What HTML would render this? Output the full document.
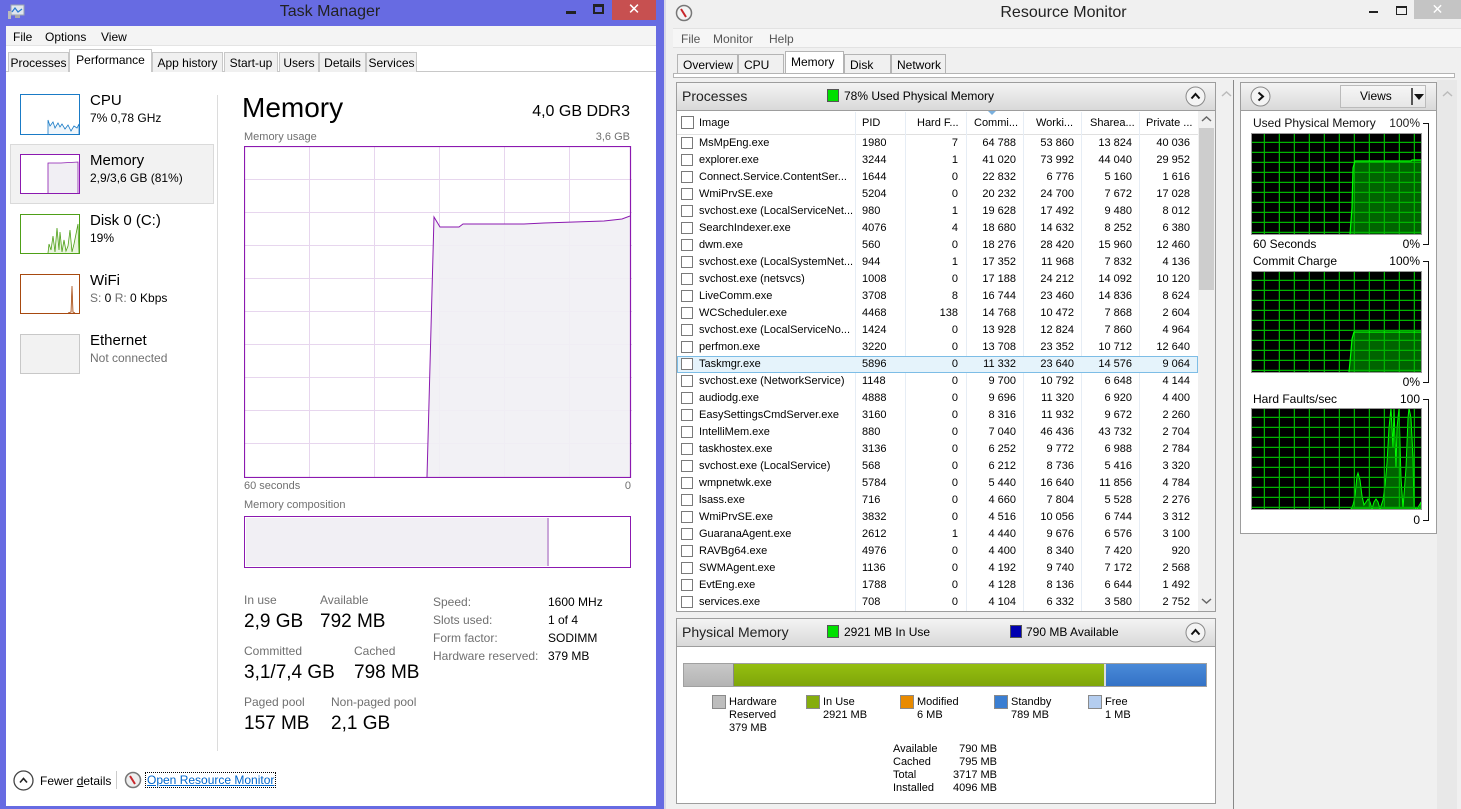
<!DOCTYPE html>
<html><head><meta charset="utf-8">
<style>
*{margin:0;padding:0;box-sizing:border-box}
body{width:1461px;height:809px;overflow:hidden;position:relative;background:#f0f0f0;font-family:"Liberation Sans",sans-serif;color:#000}
.a{position:absolute;white-space:nowrap}
.g{color:#707070}
.s11{font-size:11px}.s12{font-size:12px}
.tab{position:absolute;top:52px;height:20px;background:#f0f0f0;border:1px solid #c8c8c8;border-bottom:none;font-size:12px;padding:3px 0 0 0;text-align:center}
.rt{position:absolute;height:17px;left:677px;width:521px;font-size:11px}
.rt span{position:absolute;top:2px}
.cb{position:absolute;left:4px;top:2px;width:12px;height:12px;border:1px solid #7a7a7a;background:#fff}
.n{text-align:right}
.vl{position:absolute;top:112px;height:499px;width:1px;background:#e6edf5}
.rtab{position:absolute;top:54px;height:19px;background:#f0f0f0;border:1px solid #b4b4b4;border-bottom:none;font-size:12px;padding:3px 0 0 5px}
.hdr{position:absolute;left:676px;width:540px;height:29px;background:linear-gradient(#f4f4f4,#d9d9d9);border:1px solid #9d9d9d}
.circ{position:absolute;width:20px;height:20px;border-radius:50%;border:1px solid #8a8a8a;background:linear-gradient(#fff,#e2e2e2)}
.lg{position:absolute;width:14px;height:14px;border:1px solid #8a8a8a}
</style></head><body>

<!-- ============ TASK MANAGER ============ -->
<div class="a" style="left:0;top:0;width:665px;height:809px;background:#676be2"></div>
<svg class="a" style="left:7px;top:4px" width="18" height="16"><rect x="4" y="1" width="13" height="10" fill="#dfe6ee" stroke="#9aa4ae"/><polyline points="5,8 8,4 11,8 15,5" fill="none" stroke="#2a7ad0" stroke-width="1.2"/><rect x="1" y="7" width="3" height="8" fill="#bbb"/><rect x="8" y="11" width="5" height="3" fill="#aaa"/></svg>
<div class="a" style="left:0;width:660px;top:3px;text-align:center;font-size:16px;color:#222">Task Manager</div>
<div class="a" style="left:566px;top:11px;width:10px;height:3px;background:#222"></div>
<div class="a" style="left:593px;top:4px;width:11px;height:10px;border:2px solid #222;border-top-width:3px"></div>
<div class="a" style="left:612px;top:0;width:44px;height:20px;background:#c75050;color:#fff;text-align:center;font-size:15px;line-height:19px">✕</div>

<div class="a" style="left:6px;top:26px;width:650px;height:780px;background:#fff"></div>
<div class="a" style="left:6px;top:26px;width:650px;height:20px;background:#f4f4f4;border-bottom:1px solid #e4e4e4"></div>
<div class="a s12" style="left:13px;top:30px">File</div>
<div class="a s12" style="left:45px;top:30px">Options</div>
<div class="a s12" style="left:101px;top:30px">View</div>
<div class="a" style="left:6px;top:71px;width:650px;height:1px;background:#c8c8c8"></div>
<div class="tab" style="left:8px;width:61px">Processes</div>
<div class="tab" style="left:69px;top:49px;height:23px;width:83px;background:#fff;padding-top:3px">Performance</div>
<div class="tab" style="left:152px;width:71px">App history</div>
<div class="tab" style="left:224px;width:54px">Start-up</div>
<div class="tab" style="left:279px;width:40px">Users</div>
<div class="tab" style="left:319px;width:47px">Details</div>
<div class="tab" style="left:366px;width:51px">Services</div>

<!-- sidebar -->
<div class="a" style="left:10px;top:144px;width:204px;height:60px;background:#f2f2f2;border:1px solid #dadada"></div>
<svg class="a" style="left:20px;top:94px" width="60" height="41"><rect x="0.5" y="0.5" width="59" height="40" fill="#fff" stroke="#1a7bc6"/><polyline points="28,40 28,26 30,32 33,28 35,34 38,29 40,33 42,30 45,35 48,31 51,37 54,32 57,34 59,30 59,40" fill="#f0f6fb" stroke="#1a7bc6" stroke-width="0.8"/></svg>
<div class="a" style="left:90px;top:92px;font-size:15px">CPU</div>
<div class="a s12" style="left:90px;top:111px">7% 0,78 GHz</div>
<svg class="a" style="left:20px;top:154px" width="60" height="40"><rect x="0.5" y="0.5" width="59" height="39" fill="#fff" stroke="#8b19b0"/><polyline points="28,39 28,9 41,9 58,8 58,39" fill="#f1eff4" stroke="#8b19b0" stroke-width="0.8"/></svg>
<div class="a" style="left:90px;top:152px;font-size:15px">Memory</div>
<div class="a s12" style="left:90px;top:171px">2,9/3,6 GB (81%)</div>
<svg class="a" style="left:20px;top:214px" width="60" height="40"><rect x="0.5" y="0.5" width="59" height="39" fill="#fff" stroke="#4ea017"/><polyline points="28,39 29,30 31,36 33,22 35,38 37,14 39,36 40,18 42,38 44,26 46,37 48,32 50,16 52,38 54,30 56,20 58,10 59,39" fill="#eaf5e0" stroke="#4ea017" stroke-width="0.8"/></svg>
<div class="a" style="left:90px;top:212px;font-size:15px">Disk 0 (C:)</div>
<div class="a s12" style="left:90px;top:231px">19%</div>
<svg class="a" style="left:20px;top:274px" width="60" height="40"><rect x="0.5" y="0.5" width="59" height="39" fill="#fff" stroke="#a7490f"/><polyline points="48,39 51,38 52,12 53,38 55,39" fill="#f4e4d8" stroke="#a7490f" stroke-width="0.8"/></svg>
<div class="a" style="left:90px;top:272px;font-size:15px">WiFi</div>
<div class="a s12" style="left:90px;top:291px"><span class="g">S:</span> 0 <span class="g">R:</span> 0 Kbps</div>
<div class="a" style="left:20px;top:334px;width:60px;height:40px;background:#f2f2f2;border:1px solid #c8c8c8"></div>
<div class="a" style="left:90px;top:332px;font-size:15px">Ethernet</div>
<div class="a s12 g" style="left:90px;top:351px">Not connected</div>
<div class="a" style="left:217px;top:95px;width:1px;height:656px;background:#dcdcdc"></div>

<!-- main -->
<div class="a" style="left:242px;top:92px;font-size:28px">Memory</div>
<div class="a" style="left:430px;width:200px;text-align:right;top:103px;font-size:16px">4,0 GB DDR3</div>
<div class="a s11 g" style="left:244px;top:131px">Memory usage</div>
<div class="a s11 g" style="left:530px;width:100px;text-align:right;top:131px">3,6 GB</div>
<svg class="a" style="left:244px;top:146px" width="388" height="332">
<g stroke="#e7d6ee" stroke-width="1">
<line x1="65.5" y1="0" x2="65.5" y2="332"/><line x1="130.5" y1="0" x2="130.5" y2="332"/><line x1="195.5" y1="0" x2="195.5" y2="332"/><line x1="260.5" y1="0" x2="260.5" y2="332"/><line x1="325.5" y1="0" x2="325.5" y2="332"/>
<line x1="0" y1="33.5" x2="388" y2="33.5"/><line x1="0" y1="66.5" x2="388" y2="66.5"/><line x1="0" y1="99.5" x2="388" y2="99.5"/><line x1="0" y1="132.5" x2="388" y2="132.5"/><line x1="0" y1="165.5" x2="388" y2="165.5"/><line x1="0" y1="198.5" x2="388" y2="198.5"/><line x1="0" y1="231.5" x2="388" y2="231.5"/><line x1="0" y1="264.5" x2="388" y2="264.5"/><line x1="0" y1="297.5" x2="388" y2="297.5"/>
</g>
<polygon points="183,331 190,71 196,81 215,81 219,78 280,78 300,77 330,76 360,75 378,73 386,70 387,331" fill="#f1eff4" fill-opacity="0.9"/>
<polyline points="183,331 190,71 196,81 215,81 219,78 280,78 300,77 330,76 360,75 378,73 386,70 387,70" fill="none" stroke="#8b19b0" stroke-width="1"/>
<rect x="0.5" y="0.5" width="386" height="331" fill="none" stroke="#8b19b0" stroke-width="1.2"/>
</svg>
<div class="a s11 g" style="left:244px;top:480px">60 seconds</div>
<div class="a s11 g" style="left:530px;width:101px;text-align:right;top:480px">0</div>
<div class="a s11 g" style="left:244px;top:499px">Memory composition</div>
<div class="a" style="left:244px;top:516px;width:387px;height:52px;border:1.5px solid #8b19b0;background:#fff"></div>
<div class="a" style="left:246px;top:518px;width:303px;height:48px;background:#f1eff4;border-right:2px solid #c9a6d8"></div>

<div class="a s12 g" style="left:244px;top:593px">In use</div>
<div class="a s12 g" style="left:320px;top:593px">Available</div>
<div class="a" style="left:244px;top:611px;font-size:19px">2,9 GB</div>
<div class="a" style="left:320px;top:611px;font-size:19px">792 MB</div>
<div class="a s12 g" style="left:244px;top:644px">Committed</div>
<div class="a s12 g" style="left:354px;top:644px">Cached</div>
<div class="a" style="left:244px;top:662px;font-size:19px">3,1/7,4 GB</div>
<div class="a" style="left:354px;top:662px;font-size:19px">798 MB</div>
<div class="a s12 g" style="left:244px;top:695px">Paged pool</div>
<div class="a s12 g" style="left:331px;top:695px">Non-paged pool</div>
<div class="a" style="left:244px;top:713px;font-size:19px">157 MB</div>
<div class="a" style="left:331px;top:713px;font-size:19px">2,1 GB</div>
<div class="a s12 g" style="left:433px;top:593px;line-height:18px">Speed:<br>Slots used:<br>Form factor:<br>Hardware reserved:</div>
<div class="a s12" style="left:548px;top:593px;line-height:18px">1600 MHz<br>1 of 4<br>SODIMM<br>379 MB</div>

<svg class="a" style="left:13px;top:770px" width="21" height="21"><circle cx="10.5" cy="10.5" r="9.5" fill="#fff" stroke="#444" stroke-width="1.3"/><polyline points="7,12.5 10.5,8.5 14,12.5" fill="none" stroke="#222" stroke-width="1.6"/></svg>
<div class="a s12" style="left:40px;top:774px">Fewer <u>d</u>etails</div>
<div class="a" style="left:116px;top:771px;width:1px;height:18px;background:#ccc"></div>
<svg class="a" style="left:124px;top:771px" width="18" height="18"><circle cx="9" cy="9" r="7.5" fill="#eee" stroke="#777" stroke-width="1.5"/><line x1="6" y1="5" x2="11" y2="13" stroke="#c8262b" stroke-width="2"/></svg>
<div class="a s12" style="left:145px;top:772px;color:#0066cc;text-decoration:underline;border:1px dotted #000;padding:0 1px">Open Resource Monitor</div>

<!-- ============ RESOURCE MONITOR ============ -->
<div class="a" style="left:664px;top:0;width:2px;height:809px;background:#d8d8e8"></div>
<svg class="a" style="left:675px;top:4px" width="18" height="18"><circle cx="9" cy="9" r="7.5" fill="#f4f4f4" stroke="#777" stroke-width="1.5"/><line x1="6" y1="5" x2="11" y2="13" stroke="#c8262b" stroke-width="2"/></svg>
<div class="a" style="left:666px;width:795px;top:4px;text-align:center;font-size:16px;color:#222">Resource Monitor</div>
<div class="a" style="left:1369px;top:11px;width:9px;height:2px;background:#222"></div>
<div class="a" style="left:1396px;top:6px;width:11px;height:9px;border:1.5px solid #222;border-top-width:2px"></div>
<div class="a" style="left:1414px;top:0;width:47px;height:19px;background:#c4c4c4;color:#fff;text-align:center;font-size:14px;line-height:18px">✕</div>
<div class="a" style="left:673px;top:28px;width:788px;height:20px;background:#f6f6f6;border-top:1px solid #e2e2e2;border-bottom:1px solid #e2e2e2"></div>
<div class="a s12" style="left:681px;top:32px;color:#555">File</div>
<div class="a s12" style="left:713px;top:32px;color:#555">Monitor</div>
<div class="a s12" style="left:769px;top:32px;color:#555">Help</div>
<div class="rtab" style="left:677px;width:61px">Overview</div>
<div class="rtab" style="left:738px;width:46px">CPU</div>
<div class="rtab" style="left:785px;top:51px;height:23px;width:59px;background:#fff">Memory</div>
<div class="rtab" style="left:844px;width:47px">Disk</div>
<div class="rtab" style="left:891px;width:55px">Network</div>
<div class="a" style="left:673px;top:73px;width:782px;height:5px;border:1px solid #b4b4b4;background:#fff"></div>

<!-- processes panel -->
<div class="a" style="left:676px;top:82px;width:540px;height:530px;background:#fff;border:1px solid #9d9d9d"></div>
<div class="hdr" style="top:82px"></div>
<div class="a" style="left:682px;top:88px;font-size:14px;color:#222">Processes</div>
<div class="a" style="left:827px;top:89px;width:12px;height:13px;background:#00e000;border:1px solid #555"></div>
<div class="a s12" style="left:844px;top:89px">78% Used Physical Memory</div>
<svg class="a" style="left:1185px;top:86px" width="21" height="21"><circle cx="10.5" cy="10.5" r="9.5" fill="#f4f4f4" stroke="#8a8a8a"/><polyline points="6.5,12.5 10.5,8 14.5,12.5" fill="none" stroke="#111" stroke-width="2"/></svg>
<div class="a" style="left:677px;top:111px;width:521px;height:24px;border-bottom:1px solid #e0e0e0"></div>
<div class="a" style="left:681px;top:116px;width:13px;height:13px;border:1px solid #777;background:#fff"></div>
<div class="a s11" style="left:699px;top:117px">Image</div>
<div class="a s11" style="left:862px;top:117px">PID</div>
<div class="a s11" style="left:917px;top:117px">Hard F...</div>
<div class="a s11" style="left:974px;top:117px">Commi...</div>
<div class="a s11" style="left:1036px;top:117px">Worki...</div>
<div class="a s11" style="left:1090px;top:117px">Sharea...</div>
<div class="a s11" style="left:1146px;top:117px">Private ...</div>
<div class="a" style="left:988px;top:111px;width:0;height:0;border-left:4px solid transparent;border-right:4px solid transparent;border-top:4px solid #7ab0de"></div>
<div class="vl" style="left:855px"></div><div class="vl" style="left:905px"></div><div class="vl" style="left:966px"></div><div class="vl" style="left:1023px"></div><div class="vl" style="left:1081px"></div><div class="vl" style="left:1139px"></div>
<div class="a" style="left:1198px;top:111px;width:17px;height:500px;background:#f0f0f0"></div>
<div class="a" style="left:1199px;top:128px;width:15px;height:162px;background:#cdcdcd"></div>
<svg class="a" style="left:1201px;top:115px" width="11" height="8"><polyline points="1,6 5.5,2 10,6" fill="none" stroke="#666" stroke-width="1.5"/></svg>
<svg class="a" style="left:1201px;top:597px" width="11" height="8"><polyline points="1,2 5.5,6 10,2" fill="none" stroke="#666" stroke-width="1.5"/></svg>

<div class="rt" style="top:135px"><i class="cb"></i><span style="left:22px">MsMpEng.exe</span><span style="left:185px">1980</span><span class="n" style="right:240px">7</span><span class="n" style="right:182px">64 788</span><span class="n" style="right:124px">53 860</span><span class="n" style="right:66px">13 824</span><span class="n" style="right:8px">40 036</span></div>
<div class="rt" style="top:152px"><i class="cb"></i><span style="left:22px">explorer.exe</span><span style="left:185px">3244</span><span class="n" style="right:240px">1</span><span class="n" style="right:182px">41 020</span><span class="n" style="right:124px">73 992</span><span class="n" style="right:66px">44 040</span><span class="n" style="right:8px">29 952</span></div>
<div class="rt" style="top:169px"><i class="cb"></i><span style="left:22px">Connect.Service.ContentSer...</span><span style="left:185px">1644</span><span class="n" style="right:240px">0</span><span class="n" style="right:182px">22 832</span><span class="n" style="right:124px">6 776</span><span class="n" style="right:66px">5 160</span><span class="n" style="right:8px">1 616</span></div>
<div class="rt" style="top:186px"><i class="cb"></i><span style="left:22px">WmiPrvSE.exe</span><span style="left:185px">5204</span><span class="n" style="right:240px">0</span><span class="n" style="right:182px">20 232</span><span class="n" style="right:124px">24 700</span><span class="n" style="right:66px">7 672</span><span class="n" style="right:8px">17 028</span></div>
<div class="rt" style="top:203px"><i class="cb"></i><span style="left:22px">svchost.exe (LocalServiceNet...</span><span style="left:185px">980</span><span class="n" style="right:240px">1</span><span class="n" style="right:182px">19 628</span><span class="n" style="right:124px">17 492</span><span class="n" style="right:66px">9 480</span><span class="n" style="right:8px">8 012</span></div>
<div class="rt" style="top:220px"><i class="cb"></i><span style="left:22px">SearchIndexer.exe</span><span style="left:185px">4076</span><span class="n" style="right:240px">4</span><span class="n" style="right:182px">18 680</span><span class="n" style="right:124px">14 632</span><span class="n" style="right:66px">8 252</span><span class="n" style="right:8px">6 380</span></div>
<div class="rt" style="top:237px"><i class="cb"></i><span style="left:22px">dwm.exe</span><span style="left:185px">560</span><span class="n" style="right:240px">0</span><span class="n" style="right:182px">18 276</span><span class="n" style="right:124px">28 420</span><span class="n" style="right:66px">15 960</span><span class="n" style="right:8px">12 460</span></div>
<div class="rt" style="top:254px"><i class="cb"></i><span style="left:22px">svchost.exe (LocalSystemNet...</span><span style="left:185px">944</span><span class="n" style="right:240px">1</span><span class="n" style="right:182px">17 352</span><span class="n" style="right:124px">11 968</span><span class="n" style="right:66px">7 832</span><span class="n" style="right:8px">4 136</span></div>
<div class="rt" style="top:271px"><i class="cb"></i><span style="left:22px">svchost.exe (netsvcs)</span><span style="left:185px">1008</span><span class="n" style="right:240px">0</span><span class="n" style="right:182px">17 188</span><span class="n" style="right:124px">24 212</span><span class="n" style="right:66px">14 092</span><span class="n" style="right:8px">10 120</span></div>
<div class="rt" style="top:288px"><i class="cb"></i><span style="left:22px">LiveComm.exe</span><span style="left:185px">3708</span><span class="n" style="right:240px">8</span><span class="n" style="right:182px">16 744</span><span class="n" style="right:124px">23 460</span><span class="n" style="right:66px">14 836</span><span class="n" style="right:8px">8 624</span></div>
<div class="rt" style="top:305px"><i class="cb"></i><span style="left:22px">WCScheduler.exe</span><span style="left:185px">4468</span><span class="n" style="right:240px">138</span><span class="n" style="right:182px">14 768</span><span class="n" style="right:124px">10 472</span><span class="n" style="right:66px">7 868</span><span class="n" style="right:8px">2 604</span></div>
<div class="rt" style="top:322px"><i class="cb"></i><span style="left:22px">svchost.exe (LocalServiceNo...</span><span style="left:185px">1424</span><span class="n" style="right:240px">0</span><span class="n" style="right:182px">13 928</span><span class="n" style="right:124px">12 824</span><span class="n" style="right:66px">7 860</span><span class="n" style="right:8px">4 964</span></div>
<div class="rt" style="top:339px"><i class="cb"></i><span style="left:22px">perfmon.exe</span><span style="left:185px">3220</span><span class="n" style="right:240px">0</span><span class="n" style="right:182px">13 708</span><span class="n" style="right:124px">23 352</span><span class="n" style="right:66px">10 712</span><span class="n" style="right:8px">12 640</span></div>
<div class="rt" style="top:356px;background:#e5f3fb;border:1px solid #7dbde6"><i class="cb" style="top:1px;left:3px"></i><span style="left:21px;top:1px">Taskmgr.exe</span><span style="left:184px;top:1px">5896</span><span class="n" style="right:239px;top:1px">0</span><span class="n" style="right:181px;top:1px">11 332</span><span class="n" style="right:123px;top:1px">23 640</span><span class="n" style="right:65px;top:1px">14 576</span><span class="n" style="right:7px;top:1px">9 064</span></div>
<div class="rt" style="top:373px"><i class="cb"></i><span style="left:22px">svchost.exe (NetworkService)</span><span style="left:185px">1148</span><span class="n" style="right:240px">0</span><span class="n" style="right:182px">9 700</span><span class="n" style="right:124px">10 792</span><span class="n" style="right:66px">6 648</span><span class="n" style="right:8px">4 144</span></div>
<div class="rt" style="top:390px"><i class="cb"></i><span style="left:22px">audiodg.exe</span><span style="left:185px">4888</span><span class="n" style="right:240px">0</span><span class="n" style="right:182px">9 696</span><span class="n" style="right:124px">11 320</span><span class="n" style="right:66px">6 920</span><span class="n" style="right:8px">4 400</span></div>
<div class="rt" style="top:407px"><i class="cb"></i><span style="left:22px">EasySettingsCmdServer.exe</span><span style="left:185px">3160</span><span class="n" style="right:240px">0</span><span class="n" style="right:182px">8 316</span><span class="n" style="right:124px">11 932</span><span class="n" style="right:66px">9 672</span><span class="n" style="right:8px">2 260</span></div>
<div class="rt" style="top:424px"><i class="cb"></i><span style="left:22px">IntelliMem.exe</span><span style="left:185px">880</span><span class="n" style="right:240px">0</span><span class="n" style="right:182px">7 040</span><span class="n" style="right:124px">46 436</span><span class="n" style="right:66px">43 732</span><span class="n" style="right:8px">2 704</span></div>
<div class="rt" style="top:441px"><i class="cb"></i><span style="left:22px">taskhostex.exe</span><span style="left:185px">3136</span><span class="n" style="right:240px">0</span><span class="n" style="right:182px">6 252</span><span class="n" style="right:124px">9 772</span><span class="n" style="right:66px">6 988</span><span class="n" style="right:8px">2 784</span></div>
<div class="rt" style="top:458px"><i class="cb"></i><span style="left:22px">svchost.exe (LocalService)</span><span style="left:185px">568</span><span class="n" style="right:240px">0</span><span class="n" style="right:182px">6 212</span><span class="n" style="right:124px">8 736</span><span class="n" style="right:66px">5 416</span><span class="n" style="right:8px">3 320</span></div>
<div class="rt" style="top:475px"><i class="cb"></i><span style="left:22px">wmpnetwk.exe</span><span style="left:185px">5784</span><span class="n" style="right:240px">0</span><span class="n" style="right:182px">5 440</span><span class="n" style="right:124px">16 640</span><span class="n" style="right:66px">11 856</span><span class="n" style="right:8px">4 784</span></div>
<div class="rt" style="top:492px"><i class="cb"></i><span style="left:22px">lsass.exe</span><span style="left:185px">716</span><span class="n" style="right:240px">0</span><span class="n" style="right:182px">4 660</span><span class="n" style="right:124px">7 804</span><span class="n" style="right:66px">5 528</span><span class="n" style="right:8px">2 276</span></div>
<div class="rt" style="top:509px"><i class="cb"></i><span style="left:22px">WmiPrvSE.exe</span><span style="left:185px">3832</span><span class="n" style="right:240px">0</span><span class="n" style="right:182px">4 516</span><span class="n" style="right:124px">10 056</span><span class="n" style="right:66px">6 744</span><span class="n" style="right:8px">3 312</span></div>
<div class="rt" style="top:526px"><i class="cb"></i><span style="left:22px">GuaranaAgent.exe</span><span style="left:185px">2612</span><span class="n" style="right:240px">1</span><span class="n" style="right:182px">4 440</span><span class="n" style="right:124px">9 676</span><span class="n" style="right:66px">6 576</span><span class="n" style="right:8px">3 100</span></div>
<div class="rt" style="top:543px"><i class="cb"></i><span style="left:22px">RAVBg64.exe</span><span style="left:185px">4976</span><span class="n" style="right:240px">0</span><span class="n" style="right:182px">4 400</span><span class="n" style="right:124px">8 340</span><span class="n" style="right:66px">7 420</span><span class="n" style="right:8px">920</span></div>
<div class="rt" style="top:560px"><i class="cb"></i><span style="left:22px">SWMAgent.exe</span><span style="left:185px">1136</span><span class="n" style="right:240px">0</span><span class="n" style="right:182px">4 192</span><span class="n" style="right:124px">9 740</span><span class="n" style="right:66px">7 172</span><span class="n" style="right:8px">2 568</span></div>
<div class="rt" style="top:577px"><i class="cb"></i><span style="left:22px">EvtEng.exe</span><span style="left:185px">1788</span><span class="n" style="right:240px">0</span><span class="n" style="right:182px">4 128</span><span class="n" style="right:124px">8 136</span><span class="n" style="right:66px">6 644</span><span class="n" style="right:8px">1 492</span></div>
<div class="rt" style="top:594px"><i class="cb"></i><span style="left:22px">services.exe</span><span style="left:185px">708</span><span class="n" style="right:240px">0</span><span class="n" style="right:182px">4 104</span><span class="n" style="right:124px">6 332</span><span class="n" style="right:66px">3 580</span><span class="n" style="right:8px">2 752</span></div>

<!-- physical memory panel -->
<div class="a" style="left:676px;top:618px;width:540px;height:186px;background:#fff;border:1px solid #9d9d9d"></div>
<div class="hdr" style="top:618px"></div>
<div class="a" style="left:682px;top:624px;font-size:14px;color:#222">Physical Memory</div>
<div class="a" style="left:827px;top:625px;width:12px;height:13px;background:#00e000;border:1px solid #555"></div>
<div class="a s12" style="left:844px;top:625px">2921 MB In Use</div>
<div class="a" style="left:1010px;top:625px;width:12px;height:13px;background:#0000b0;border:1px solid #555"></div>
<div class="a s12" style="left:1026px;top:625px">790 MB Available</div>
<svg class="a" style="left:1185px;top:622px" width="21" height="21"><circle cx="10.5" cy="10.5" r="9.5" fill="#f4f4f4" stroke="#8a8a8a"/><polyline points="6.5,12.5 10.5,8 14.5,12.5" fill="none" stroke="#111" stroke-width="2"/></svg>
<div class="a" style="left:683px;top:663px;width:524px;height:24px;border:1px solid #a0a0a0;display:flex">
<div style="width:49px;background:linear-gradient(#c8c8c8,#b4b4b4)"></div>
<div style="width:371px;background:linear-gradient(#95bf10,#7fa50a);border-left:1px solid #888"></div>
<div style="flex:1;background:linear-gradient(#4a8ad8,#3472c6);border-left:2px solid #ddd"></div></div>
<div class="lg" style="left:712px;top:695px;background:#bdbdbd"></div>
<div class="lg" style="left:806px;top:695px;background:#85ad0d"></div>
<div class="lg" style="left:900px;top:695px;background:#e88a00"></div>
<div class="lg" style="left:994px;top:695px;background:#3a7ed2"></div>
<div class="lg" style="left:1088px;top:695px;background:#b4cdef"></div>
<div class="a s11" style="left:729px;top:696px;line-height:13px">Hardware<br>Reserved<br>379 MB</div>
<div class="a s11" style="left:823px;top:696px;line-height:13px">In Use<br>2921 MB</div>
<div class="a s11" style="left:917px;top:696px;line-height:13px">Modified<br>6 MB</div>
<div class="a s11" style="left:1011px;top:696px;line-height:13px">Standby<br>789 MB</div>
<div class="a s11" style="left:1105px;top:696px;line-height:13px">Free<br>1 MB</div>
<div class="a s11" style="left:893px;top:743px;line-height:13px">Available<br>Cached<br>Total<br>Installed</div>
<div class="a s11" style="left:936px;width:61px;text-align:right;top:743px;line-height:13px">790 MB<br>795 MB<br>3717 MB<br>4096 MB</div>

<!-- middle separators / scrollbars -->
<div class="a" style="left:1233px;top:80px;width:1px;height:729px;background:#888"></div>
<svg class="a" style="left:1221px;top:90px" width="11" height="8"><polyline points="1,6 5.5,2 10,6" fill="none" stroke="#bbb" stroke-width="1.5"/></svg>
<div class="a" style="left:1437px;top:80px;width:20px;height:729px;background:#e8e8e8"></div>
<svg class="a" style="left:1442px;top:90px" width="11" height="8"><polyline points="1,6 5.5,2 10,6" fill="none" stroke="#bbb" stroke-width="1.5"/></svg>

<!-- right graphs panel -->
<div class="a" style="left:1240px;top:82px;width:197px;height:452px;background:#fff;border:1px solid #9d9d9d"></div>
<div class="a" style="left:1240px;top:82px;width:197px;height:29px;background:linear-gradient(#f4f4f4,#d9d9d9);border:1px solid #9d9d9d"></div>
<svg class="a" style="left:1250px;top:86px" width="21" height="21"><circle cx="10.5" cy="10.5" r="9.5" fill="#f4f4f4" stroke="#8a8a8a"/><polyline points="8.5,6.5 13,10.5 8.5,14.5" fill="none" stroke="#111" stroke-width="2"/></svg>
<div class="a" style="left:1340px;top:85px;width:86px;height:23px;background:linear-gradient(#f6f6f6,#e6e6e6);border:1px solid #bbb"></div>
<div class="a s12" style="left:1360px;top:89px">Views</div>
<div class="a" style="left:1411px;top:88px;width:2px;height:17px;background:#555"></div>
<div class="a" style="left:1414px;top:94px;width:0;height:0;border-left:5px solid transparent;border-right:5px solid transparent;border-top:6px solid #111"></div>

<div class="a s12" style="left:1253px;top:116px;color:#111">Used Physical Memory</div>
<div class="a s12" style="left:1380px;width:40px;text-align:right;top:116px;color:#222">100%</div>
<div class="a s12" style="left:1253px;top:237px">60 Seconds</div>
<div class="a s12" style="left:1380px;width:40px;text-align:right;top:237px">0%</div>
<div class="a" style="left:1423px;top:123px;width:6px;height:122px;border:1.5px solid #111;border-left:none"></div>
<div class="a s12" style="left:1253px;top:254px">Commit Charge</div>
<div class="a s12" style="left:1380px;width:40px;text-align:right;top:254px">100%</div>
<div class="a s12" style="left:1380px;width:40px;text-align:right;top:375px">0%</div>
<div class="a" style="left:1423px;top:261px;width:6px;height:122px;border:1.5px solid #111;border-left:none"></div>
<div class="a s12" style="left:1253px;top:392px">Hard Faults/sec</div>
<div class="a s12" style="left:1380px;width:40px;text-align:right;top:392px">100</div>
<div class="a s12" style="left:1380px;width:40px;text-align:right;top:513px">0</div>
<div class="a" style="left:1423px;top:399px;width:6px;height:122px;border:1.5px solid #111;border-left:none"></div>

<svg class="a" style="left:1251px;top:133px" width="171" height="102">
<defs><pattern id="gr" width="15" height="10" patternUnits="userSpaceOnUse" x="-1" y="0"><path d="M14.5 0V10M0 9.5H15" stroke="#00b400" stroke-width="1.5"/></pattern></defs>
<rect width="171" height="102" fill="#000"/>
<polygon points="99,101 101,75 102,35 104,28 160,28 161,27 170,27 170,101" fill="#006400"/>
<rect width="171" height="102" fill="url(#gr)"/>
<polyline points="99,101 101,75 102,35 104,28 160,28 161,27 170,27" fill="none" stroke="#00ff00" stroke-width="1.2"/>
<rect x="0.5" y="0.5" width="170" height="101" fill="none" stroke="#999"/>
</svg>
<svg class="a" style="left:1251px;top:271px" width="171" height="102">
<rect width="171" height="102" fill="#000"/>
<polygon points="98,101 100,80 101,68 103,61 170,61 170,101" fill="#006400"/>
<rect width="171" height="102" fill="url(#gr)"/>
<polyline points="98,101 100,80 101,68 103,61 170,61" fill="none" stroke="#00ff00" stroke-width="1.2"/>
<rect x="0.5" y="0.5" width="170" height="101" fill="none" stroke="#999"/>
</svg>
<svg class="a" style="left:1251px;top:408px" width="171" height="102">
<rect width="171" height="102" fill="#000"/>
<polygon points="100,101 102,97 104,88 106,68 107,65 109,72 111,88 113,97 115,94 117,91 119,94 121,101 123,94 125,91 127,94 129,101 132,92 134,78 136,55 138,20 140,0 142,40 143,0 145,60 146,20 148,0 150,70 152,100 155,60 157,10 158,0 160,10 162,50 163,100 166,101 169,96 170,94 170,101" fill="#006400" stroke="#00ff00" stroke-width="1"/>
<rect width="171" height="102" fill="url(#gr)"/>
<rect x="0.5" y="0.5" width="170" height="101" fill="none" stroke="#999"/>
</svg>

</body></html>
